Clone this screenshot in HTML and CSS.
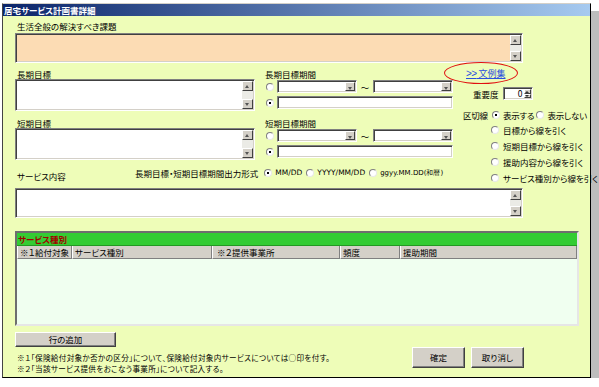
FILE: index.html
```html
<!DOCTYPE html>
<html lang="ja">
<head>
<meta charset="utf-8">
<title>居宅サービス計画書詳細</title>
<link rel="stylesheet" href="styles.css">
</head>
<body>
<div class="window">
  <div class="titlebar">居宅サービス計画書詳細</div>
  <div class="content">
    <div class="label">生活全般の解決すべき課題</div>
    <div class="field peach">
      <div class="area"></div>
      <div class="vscroll"><span class="sb up"></span><span class="track"></span><span class="sb down"></span></div>
    </div>

    <div class="grid">
      <div class="goal goal-a">
        <div class="label">長期目標</div>
        <div class="field goalbox">
          <div class="area"></div>
          <div class="vscroll"><span class="sb up"></span><span class="track"></span><span class="sb down"></span></div>
        </div>
      </div>
      <div class="period period-a">
        <div class="label flush">長期目標期間</div>
        <div class="prow">
          <span class="radio"></span>
          <div class="field combo"><div class="area"></div><span class="drop"></span></div>
          <span class="tilde">～</span>
          <div class="field combo"><div class="area"></div><span class="drop"></span></div>
        </div>
        <div class="prow second">
          <span class="radio on"></span>
          <div class="field textin"></div>
        </div>
      </div>

      <div class="side">
        <div class="linkwrap"><a class="link"><span class="gt">&gt;&gt;</span> 文例集</a><span class="ellipse"></span></div>
        <div class="prio">
          <span>重要度</span>
          <div class="field spin"><span class="spinval">0</span><span class="spinbtns"><span class="sp up"></span><span class="sp down"></span></span></div>
        </div>
        <div class="divider">
          <span>区切線</span>
          <span class="radio on first"></span><span>表示する</span>
          <span class="radio"></span><span>表示しない</span>
        </div>
        <div class="rlist">
          <div class="ritem"><span class="radio"></span><span>目標から線を引く</span></div>
          <div class="ritem"><span class="radio"></span><span>短期目標から線を引く</span></div>
          <div class="ritem"><span class="radio"></span><span>援助内容から線を引く</span></div>
          <div class="ritem"><span class="radio"></span><span>サービス種別から線を引く</span></div>
        </div>
      </div>

      <div class="goal goal-b">
        <div class="label">短期目標</div>
        <div class="field goalbox">
          <div class="area"></div>
          <div class="vscroll"><span class="sb up"></span><span class="track"></span><span class="sb down"></span></div>
        </div>
      </div>
      <div class="period period-b">
        <div class="label flush">短期目標期間</div>
        <div class="prow">
          <span class="radio"></span>
          <div class="field combo"><div class="area"></div><span class="drop"></span></div>
          <span class="tilde">～</span>
          <div class="field combo"><div class="area"></div><span class="drop"></span></div>
        </div>
        <div class="prow second">
          <span class="radio on"></span>
          <div class="field textin"></div>
        </div>
      </div>

      <div class="rowc">
        <div class="label svclabel">サービス内容</div>
        <div class="format">
          <span class="fmtlabel">長期目標・短期目標期間出力形式</span>
          <span class="radio on"></span><span class="opt">MM/DD</span>
          <span class="radio"></span><span class="opt">YYYY/MM/DD</span>
          <span class="radio"></span><span class="opt small">ggyy.MM.DD(和暦)</span>
        </div>
      </div>
    </div>

    <div class="field service">
      <div class="area"></div>
      <div class="vscroll"><span class="sb up"></span><span class="track"></span><span class="sb down"></span></div>
    </div>

    <div class="table">
      <div class="ttitle">サービス種別</div>
      <div class="thead">
        <span class="th c1">※１給付対象</span>
        <span class="th c2">サービス種別</span>
        <span class="th c3">※２提供事業所</span>
        <span class="th c4">頻度</span>
        <span class="th c5">援助期間</span>
      </div>
      <div class="tbody"></div>
    </div>

    <div class="bottom">
      <div class="left">
        <div class="btn addrow">行の追加</div>
        <div class="notes">
          <div>※１「保険給付対象か否かの区分」について、保険給付対象内サービスについては○印を付す。</div>
          <div>※２「当該サービス提供をおこなう事業所」について記入する。</div>
        </div>
      </div>
      <div class="actions">
        <div class="btn act">確定</div>
        <div class="btn act">取り消し</div>
      </div>
    </div>
  </div>
</div>
</body>
</html>
```
FILE: styles.css
```css
body {
  margin: 0;
  background: #fff;
  font-family: "Noto Sans CJK JP", sans-serif;
  font-size: 8.5px;
  line-height: 10px;
  color: #000;
  font-feature-settings: "palt";
}

.window {
  margin: 3px 0 0 2px;
  width: 589px;
  height: 375px;
  box-sizing: border-box;
  border: 1px solid #000;
  border-left-color: #444;
  border-top-color: #d4d0c8;
  background: #eefdb8;
  box-shadow: 8px 8px 0 #bdbdbd;
  display: flex;
  flex-direction: column;
}

.titlebar {
  height: 12px;
  line-height: 12px;
  background: linear-gradient(to right, #0a246a, #a6caf0);
  color: #fff;
  font-weight: bold;
  padding-left: 1px;
  white-space: nowrap;
}

.content {
  flex: 1;
  padding: 5px 10px 0 12px;
}

.label {
  height: 10px;
  padding-left: 2px;
  white-space: nowrap;
}
.label.flush { padding-left: 0; }

.field {
  display: flex;
  box-sizing: border-box;
  border: 1px solid;
  border-color: #808080 #fff #fff #808080;
  box-shadow: inset 1px 1px 0 #404040, inset -1px -1px 0 #d4d0c8;
  background: #fff;
}
.area { flex: 1; }

.vscroll {
  width: 11px;
  display: flex;
  flex-direction: column;
  margin: 1px 1px 1px 0;
}
.sb {
  height: 10px;
  box-sizing: border-box;
  background: #d4d0c8;
  border: 1px solid;
  border-color: #fff #404040 #404040 #fff;
  position: relative;
}
.sb::after {
  content: "";
  position: absolute;
  left: 2px;
  top: 3px;
  border-left: 2.5px solid transparent;
  border-right: 2.5px solid transparent;
}
.sb.up::after { border-bottom: 3px solid #555; }
.sb.down::after { border-top: 3px solid #555; }
.track { flex: 1; background: #ebebe6; }

.peach {
  width: 508px;
  height: 30px;
  margin-top: 2px;
  background: #fcdcb4;
}

.grid {
  display: grid;
  grid-template-columns: 250px 197px 1fr;
  grid-template-rows: 42px 42px 14px;
  row-gap: 7px;
  margin-top: 6px;
}
.goal-a { grid-column: 1; grid-row: 1; }
.goal-b { grid-column: 1; grid-row: 2; }
.period-a { grid-column: 2; grid-row: 1; }
.period-b { grid-column: 2; grid-row: 2; }
.side { grid-column: 3; grid-row: 1 / span 3; }
.rowc { grid-column: 1 / span 2; grid-row: 3; display: flex; }

.goalbox { width: 240px; height: 32px; }

.prow {
  display: flex;
  align-items: center;
  height: 13px;
  margin-top: 1px;
}
.prow.second { margin-top: 3px; }
.prow .radio { margin: 0 3px 0 1px; }
.combo { width: 80px; height: 13px; }
.drop {
  width: 10px;
  margin: 1px 1px 1px 0;
  box-sizing: border-box;
  background: #d4d0c8;
  border: 1px solid;
  border-color: #fff #404040 #404040 #fff;
  position: relative;
}
.drop::after {
  content: "";
  position: absolute;
  left: 2px;
  top: 4px;
  border-left: 2.5px solid transparent;
  border-right: 2.5px solid transparent;
  border-top: 3px solid #555;
}
.tilde { width: 16px; text-align: center; }
.textin { width: 176px; height: 13px; }

.radio {
  display: inline-block;
  flex: none;
  width: 8px;
  height: 8px;
  box-sizing: border-box;
  border-radius: 50%;
  border: 1px solid;
  border-color: #808080 #e8e8e8 #e8e8e8 #808080;
  background: #fff;
  position: relative;
}
.radio.on::after {
  content: "";
  position: absolute;
  left: 2px;
  top: 2px;
  width: 2px;
  height: 2px;
  background: #000;
}

.linkwrap {
  position: relative;
  margin: -1px 0 0 4px;
  height: 10px;
}
.link {
  color: #2b4fe0;
  text-decoration: underline;
  white-space: nowrap;
  font-size: 9px;
}
.gt { font-family: "Liberation Sans", sans-serif; font-size: 10px; letter-spacing: -0.6px; }
.ellipse {
  position: absolute;
  left: -22px;
  top: -6px;
  width: 72px;
  height: 20px;
  border: 1.5px solid #e01010;
  border-radius: 50%;
}

.prio {
  display: flex;
  align-items: center;
  margin: 9px 0 0 11px;
}
.spin {
  width: 30px;
  height: 13px;
  margin-left: 4px;
}
.spinval { flex: 1; text-align: right; padding-right: 1px; line-height: 11px; }
.spinbtns {
  width: 7px;
  display: flex;
  flex-direction: column;
  margin: 1px 1px 1px 0;
}
.sp {
  flex: 1;
  background: #d4d0c8;
  border: 1px solid;
  border-color: #fff #404040 #404040 #fff;
  position: relative;
}
.sp::after {
  content: "";
  position: absolute;
  left: 0.5px;
  top: 1px;
  border-left: 2px solid transparent;
  border-right: 2px solid transparent;
}
.sp.up::after { border-bottom: 2px solid #333; }
.sp.down::after { border-top: 2px solid #333; top: 0.5px; }

.divider {
  display: flex;
  align-items: center;
  margin: 10px 0 0 1px;
  white-space: nowrap;
  letter-spacing: -0.2px;
}
.divider .radio { margin: 0 3px 0 2px; }
.divider .radio.first { margin-left: 4px; }

.rlist {
  margin: 5px 0 0 29px;
  display: flex;
  flex-direction: column;
  gap: 6px;
}
.ritem {
  display: flex;
  align-items: center;
  gap: 4px;
  height: 10px;
  white-space: nowrap;
}

.svclabel { width: 118px; align-self: flex-end; }
.format {
  display: flex;
  align-items: center;
  height: 10px;
  margin-top: 1px;
  white-space: nowrap;
}
.fmtlabel { margin-right: 6px; }
.format .radio { margin-right: 3px; }
.opt { margin-right: 4px; font-family: "DejaVu Sans", sans-serif; font-size: 7.5px; }
.opt.small { font-size: 7px; }

.service {
  width: 508px;
  height: 30px;
  margin-top: 7px;
}

.table {
  margin-top: 13px;
  width: 564px;
  height: 95px;
  box-sizing: border-box;
  border: 2px solid;
  border-color: #6e6e6e #e6e6e6 #e6e6e6 #6e6e6e;
  display: flex;
  flex-direction: column;
}
.ttitle {
  height: 12px;
  line-height: 12px;
  background: #33cc33;
  color: #a00000;
  font-weight: bold;
  padding-left: 1px;
  border-bottom: 1px solid #229922;
}
.thead {
  display: flex;
  height: 13px;
  background: #d4d0c8;
}
.th {
  box-sizing: border-box;
  padding-left: 2px;
  line-height: 13px;
  border-left: 1px solid #fff;
  border-right: 1px solid #808080;
  border-bottom: 1px solid #808080;
  white-space: nowrap;
}
.c1 { width: 55px; }
.c2 { width: 140px; }
.c3 { width: 128px; padding-left: 4px; }
.c4 { width: 60px; }
.c5 { flex: 1; }
.tbody { flex: 1; background: #f0fff0; }

.bottom {
  display: flex;
  margin-top: 6px;
}
.btn {
  box-sizing: border-box;
  background: #d4d0c8;
  border: 1px solid;
  border-color: #fff #404040 #404040 #fff;
  box-shadow: inset -1px -1px 0 #808080;
  text-align: center;
  white-space: nowrap;
}
.addrow { width: 101px; height: 15px; line-height: 13px; }
.notes {
  margin-top: 5px;
  padding-left: 2px;
  white-space: nowrap;
  font-size: 7.6px;
  line-height: 11px;
  letter-spacing: 0.3px;
}
.actions {
  display: flex;
  gap: 6px;
  margin: 15px 56px 0 auto;
}
.act { width: 53px; height: 21px; line-height: 19px; }
```
